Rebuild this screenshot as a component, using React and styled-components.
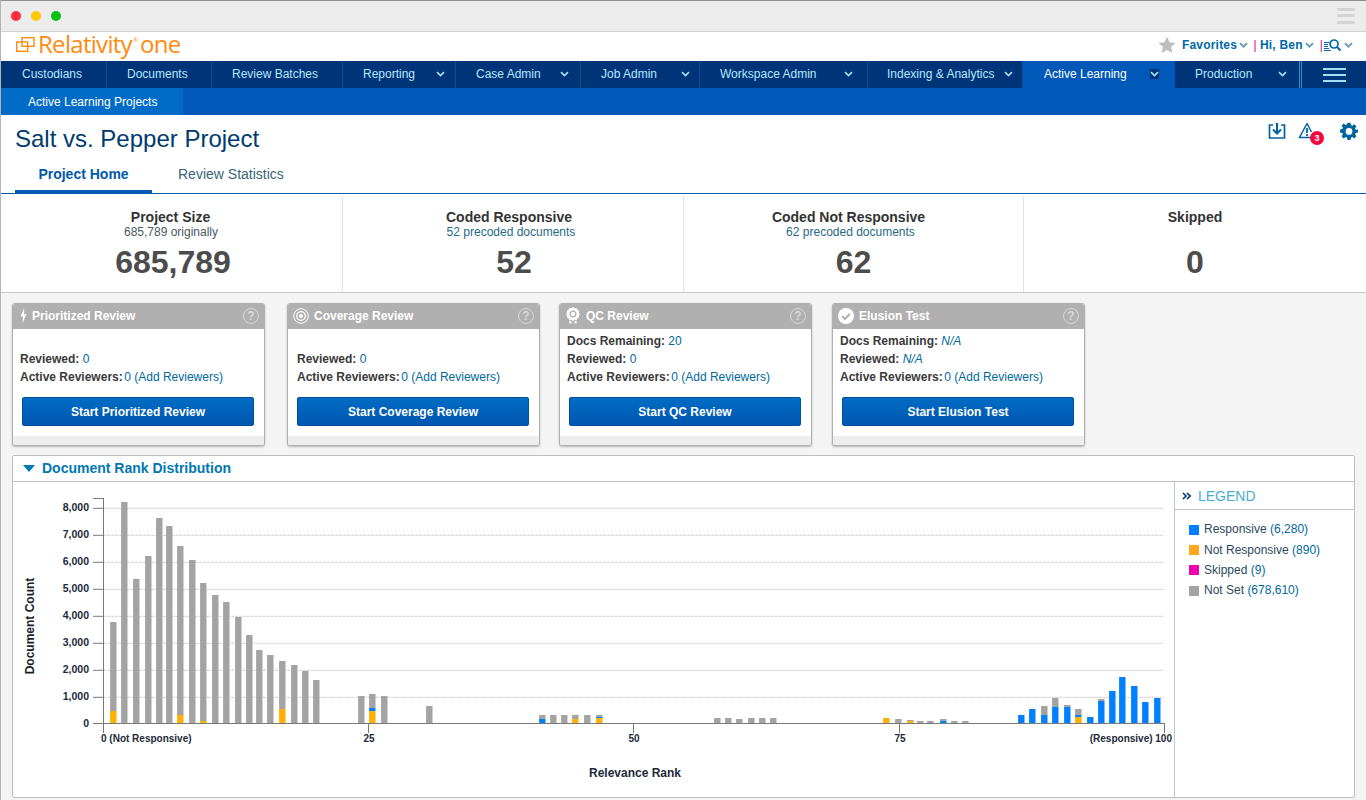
import React from "react";
import styled, { createGlobalStyle } from "styled-components";

const Global = createGlobalStyle`
  html, body { margin: 0; padding: 0; background: #f4f4f4; }
  body { font-family: "Liberation Sans", Arial, sans-serif; font-size: 12px; color: #333; }
  * { box-sizing: border-box; }
`;

const Win = styled.div`
  width: 1366px; height: 800px; overflow: hidden; display: flex; flex-direction: column;
  border-top: 1px solid #8f8f8f; border-left: 1px solid #b5b5b5; background: #f4f4f4;
`;
const TitleBar = styled.div`
  height: 31px; flex: none; background: #ececec; border-bottom: 1px solid #d2d2d2;
  display: flex; align-items: center; padding: 0 11px 1px 10px; gap: 10px;
`;
const Light = styled.span`
  width: 10px; height: 10px; border-radius: 50%; background: ${p => p.$c};
`;
const WinMenu = styled.div`
  margin-left: auto; width: 18px; display: flex; flex-direction: column; gap: 3.5px;
  span { height: 3px; border-radius: 1.5px; background: #d4d4d4; }
`;
const LogoBar = styled.div`
  height: 29px; flex: none; background: #fff; display: flex; align-items: center; padding: 0 13px 5px 15px;
`;
const LogoText = styled.span`
  font-family: "Open Sans", sans-serif; font-weight: 400; font-size: 24px; letter-spacing: -0.7px; color: #ff8a10;
  margin-left: 3px; line-height: 24px;
  sup { font-size: 5px; vertical-align: 11px; margin: 0 2.5px 0 1.5px; letter-spacing: 0; line-height: 0; }
`;
const UserBox = styled.div`
  margin-left: auto; margin-top: 2px; display: flex; align-items: center; font-weight: 700; color: #0068a8;
  font-size: 12px; letter-spacing: 0.2px;
`;
const Pipe = styled.span`
  color: #e0107a; font-weight: 400; margin: ${p => p.$m || "0 3px 0 6px"};
`;
const ChevronSlot = styled.span`
  display: inline-flex; margin-left: ${p => p.$ml ?? 2}px; padding: ${p => (p.$boxed ? "1.5px 0" : "0")};
  background: ${p => (p.$boxed ? "#003478" : "transparent")};
`;
const MainNav = styled.nav`
  height: 27px; flex: none; display: flex; background: #003478;
`;
const NavItem = styled.div`
  width: ${p => p.$w}px; flex: none; display: flex; align-items: center; justify-content: space-between;
  padding: 0 ${p => p.$pr ?? 8}px 1px ${p => p.$pl ?? 20}px;
  background: ${p => (p.$active ? "#0058b8" : "transparent")};
  color: ${p => (p.$active ? "#fff" : "#b4e8ff")};
  border-right: 1px solid ${p => (p.$active || p.$plain ? "transparent" : "#0e4f9c")};
`;
const NavEnd = styled.div`
  flex: 1; display: flex; align-items: center; justify-content: center; padding: 0 19px 0 19px;
  border-left: 3px double #2d8fd0;
`;
const NavBurger = styled.div`
  width: 23px; display: flex; flex-direction: column; gap: 4px;
  span { height: 2px; background: #a4e0fa; }
`;
const SubNav = styled.div`
  height: 27px; flex: none; background: #0058b8; display: flex;
`;
const SubItem = styled.div`
  width: 182px; padding-left: 27px; background: #006cc8; color: #fff; display: flex; align-items: center;
`;
const PageHead = styled.header`
  height: 79px; flex: none; background: #fff; border-bottom: 1px solid #0058a8; padding: 0 8px 0 14px;
  display: flex; flex-direction: column; position: relative;
`;
const TitleRow = styled.div`
  display: flex; justify-content: space-between; height: 47px;
`;
const PageTitle = styled.h1`
  margin: 9px 0 0; font-weight: 400; font-size: 24px; line-height: 30px; color: #003a6e;
`;
const Tools = styled.div`
  display: flex; align-items: flex-start; padding-top: 7px;
`;
const Tool = styled.div`
  position: relative; width: 18px; height: 18px; display: flex; margin-right: ${p => p.$mr ?? 0}px;
`;
const Badge = styled.span`
  position: absolute; left: 12px; top: 9px; width: 14px; height: 14px; border-radius: 50%;
  background: #f5073e; color: #fff; font-size: 9px; font-weight: 700; line-height: 14px; text-align: center;
`;
const Tabs = styled.div`
  display: flex; align-items: stretch; height: 31px; margin-bottom: -1px;
`;
const Tab = styled.div`
  width: ${p => p.$w}px; text-align: ${p => (p.$active ? "center" : "left")}; font-size: 14px; line-height: 24px;
  padding-left: ${p => (p.$active ? 0 : 26)}px; font-weight: ${p => (p.$active ? 700 : 400)};
  color: ${p => (p.$active ? "#0058a8" : "#3a6478")};
  border-bottom: ${p => (p.$active ? "3px solid #0058b8" : "0")};
`;
const Stats = styled.section`
  height: 99px; flex: none; display: flex; background: #fff; border-bottom: 1px solid #c8c8c8; padding-top: 2px;
`;
const Stat = styled.div`
  width: ${p => p.$w}px; flex: none; text-align: center; border-right: ${p => (p.$last ? "0" : "1px solid #e4e4e4")};
  padding-top: 13px;
`;
const StatTitle = styled.div`
  font-weight: 700; font-size: 14px; line-height: 16px; color: #333; padding-right: ${p => p.$shift ?? 0}px;
`;
const StatSub = styled.div`
  font-size: 12px; line-height: 14px; color: ${p => (p.$teal ? "#1f6a84" : "#4a5a60")};
  padding-right: ${p => p.$shift ?? 0}px;
`;
const StatValue = styled.div`
  font-weight: 700; font-size: 32px; line-height: 36px; color: #4c4c4c; margin-top: 5px; padding-left: ${p => p.$shift ?? 0}px;
`;
const Content = styled.main`
  flex: 1; padding: 10px 10px 0 11px; display: flex; flex-direction: column; min-height: 0; background: #f4f4f4;
`;
const Cards = styled.div`
  display: flex; height: 143px; flex: none;
`;
const Card = styled.article`
  width: 253px; height: 143px; margin-right: ${p => p.$mr}px; flex: none; display: flex; flex-direction: column;
  background: #fff; border-radius: 3px; border: 1px solid #b0b0b0; box-shadow: 0 1px 2px rgba(0,0,0,.25); overflow: hidden;
`;
const CardHead = styled.div`
  height: 25px; flex: none; background: #b0b0b0; color: #fff; font-weight: 700; display: flex; align-items: center;
  padding: 0 5px 2px ${p => p.$pl ?? 5}px; gap: ${p => p.$gap ?? 4}px;
`;
const HelpMark = styled.span`
  margin-left: auto; width: 16px; height: 16px; border: 1px solid #d8d8d8; border-radius: 50%; color: #d8d8d8;
  font-size: 12px; font-weight: 700; line-height: 14px; text-align: center;
`;
const CardBody = styled.div`
  flex: 1; padding: 3px ${p => p.$pad ?? 7}px 0; display: flex; flex-direction: column;
`;
const Row = styled.div`
  height: 18px; line-height: 18px; font-weight: 700; color: #3a3a3a; white-space: nowrap;
`;
const Val = styled.span`
  font-weight: 400; color: #00689c; font-style: ${p => (p.$i ? "italic" : "normal")};
  margin-left: ${p => p.$ml ?? 0}px;
`;
const StartBtn = styled.div`
  height: 29px; width: 232px; flex: none; margin: 11px 0 0 ${p => p.$ml}px; border-radius: 2px; color: #fff; font-weight: 700;
  background: linear-gradient(#006cc4, #0056b0); border: 1px solid #004f9c; line-height: 28px; text-align: center;
`;
const CardFoot = styled.div`
  height: 9px; flex: none; background: #eeeeee;
`;
const Panel = styled.section`
  margin-top: 9px; width: 1343px; height: 343px; flex: none; background: #fff; border: 1px solid #bdbdbd;
  border-radius: 2px; display: flex; flex-direction: column;
`;
const PanelHead = styled.div`
  height: 26px; flex: none; border-bottom: 1px solid #bdbdbd; display: flex; align-items: center; gap: 7px;
  padding: 0 0 1px 10px; color: #0078b4; font-weight: 700; font-size: 14px;
`;
const PanelBody = styled.div`
  flex: 1; display: flex; min-height: 0;
`;
const ChartBox = styled.div`
  width: 1161px; flex: none;
  svg { display: block; }
`;
const Legend = styled.aside`
  flex: 1; border-left: 1px solid #c4c4c4; display: flex; flex-direction: column;
`;
const LegendHead = styled.div`
  height: 28px; flex: none; border-bottom: 1px solid #c4c4c4; display: flex; align-items: center; gap: 7px;
  padding-left: 7px; color: #46aed0; font-size: 14px;
`;
const LegendList = styled.div`
  padding: 9px 0 0 14px; display: flex; flex-direction: column;
`;
const LegendItem = styled.div`
  height: 20.4px; display: flex; align-items: center; gap: 5px; color: #2a4a62;
`;
const Swatch = styled.span`
  width: 10px; height: 10px; background: ${p => p.$c}; flex: none; margin-top: 1px;
`;

const Chevron = ({ color = "#a8e0f8", size = 9, sw = 1.6 }) => (
  <svg width={size} height={size * 0.7} viewBox="0 0 9 6" fill="none" stroke={color} strokeWidth={sw}>
    <path d="M1 1l3.5 3.5L8 1" />
  </svg>
);

const navItems = [
  { t: "Custodians", w: 106, pl: 21 },
  { t: "Documents", w: 105 },
  { t: "Review Batches", w: 131 },
  { t: "Reporting", w: 113, c: 1, pr: 10 },
  { t: "Case Admin", w: 125, c: 1, pr: 11 },
  { t: "Job Admin", w: 119, c: 1, pr: 9 },
  { t: "Workspace Admin", w: 168, c: 1, pr: 14 },
  { t: "Indexing & Analytics", w: 155, c: 1, pr: 9, pl: 19 },
  { t: "Active Learning", w: 152, c: 1, pr: 15, pl: 21, active: 1 },
  { t: "Production", w: 124, c: 1, pr: 11, pl: 20, plain: 1 },
];

const Bolt = () => (
  <svg width="7" height="15" viewBox="0 0 7 15" fill="#fff"><path d="M4.200 0L.6 8.200h2.300L2.600 15l3.900-9H4L4.200 0z" /></svg>
);
const Target = () => (
  <svg width="16" height="16" viewBox="0 0 16 16" fill="none" stroke="#fff">
    <circle cx="8" cy="8" r="7.300" /><circle cx="8" cy="8" r="4.300" strokeWidth="1.300" /><circle cx="8" cy="8" r="1.900" fill="#fff" stroke="none" />
  </svg>
);
const Award = () => (
  <svg width="14" height="17" viewBox="0 0 14 17" fill="#fff">
    <path fillRule="evenodd" d="M7 0l1.600 1.200 2-.2.800 1.800 1.800.9-.2 2L14 7l-1 1.300.2 2-1.800.9-.8 1.800-2-.2L7 14l-1.600-1.200-2 .2-.8-1.800-1.800-.9.2-2L0 7l1-1.300-.2-2 1.800-.9.8-1.800 2 .2L7 0zm0 3.500a3.500 3.500 0 100 7 3.500 3.500 0 000-7z" />
    <circle cx="7" cy="7" r="2.200" />
    <path d="M3.500 13.500l2 .8V17l-1-1-1 1zM8.500 14.300l2-.8V17l-1-1-1 1z" />
  </svg>
);
const CheckDisc = () => (
  <svg width="16" height="16" viewBox="0 0 16 16">
    <circle cx="8" cy="8" r="8" fill="#fff" />
    <path d="M4.200 8.200l2.700 2.700 5-5.200" fill="none" stroke="#b0b0b0" strokeWidth="2" />
  </svg>
);

const cards = [
  { title: "Prioritized Review", icon: <Bolt />, mr: 22, pl: 7, gap: 5, pad: 7, ml: 2, btn: "Start Prioritized Review", rows: [null, ["Reviewed: ", "0"]] },
  { title: "Coverage Review", icon: <Target />, mr: 19, pl: 5, gap: 5, pad: 9, ml: 0, btn: "Start Coverage Review", rows: [null, ["Reviewed: ", "0"]] },
  { title: "QC Review", icon: <Award />, mr: 20, pl: 6, gap: 6, pad: 7, ml: 2, btn: "Start QC Review", rows: [["Docs Remaining: ", "20"], ["Reviewed: ", "0"]] },
  { title: "Elusion Test", icon: <CheckDisc />, mr: 0, pl: 5, gap: 5, pad: 7, ml: 2, btn: "Start Elusion Test", rows: [["Docs Remaining: ", "N/A", 1], ["Reviewed: ", "N/A", 1]] },
];

const GRAY = "#a3a3a3", BLUE = "#0080ff", ORANGE = "#ffb000";
// x centre, then [colour, top y] stacked from the top of each bar down to the axis
const bars = [
  [113.3, [GRAY, 622], [ORANGE, 711]], [124.3, [GRAY, 502]], [136.3, [GRAY, 579]], [148.3, [GRAY, 556]],
  [159.3, [GRAY, 518]], [169.3, [GRAY, 526]], [180.3, [GRAY, 546], [ORANGE, 715]], [192.3, [GRAY, 560]],
  [203.3, [GRAY, 583], [ORANGE, 721]], [215.3, [GRAY, 595]], [226.3, [GRAY, 602]], [238.3, [GRAY, 617]],
  [249.3, [GRAY, 635]], [259.3, [GRAY, 650]], [270.3, [GRAY, 655]], [282.3, [GRAY, 661], [ORANGE, 709]],
  [294.3, [GRAY, 665]], [305.3, [GRAY, 671]], [316.3, [GRAY, 680]],
  [361.3, [GRAY, 696]], [372.3, [GRAY, 694], [BLUE, 708], [ORANGE, 711]], [384.3, [GRAY, 696]], [429.3, [GRAY, 706]],
  [542.3, [GRAY, 715], [BLUE, 719]], [553.3, [GRAY, 715]], [564.3, [GRAY, 715]], [575.3, [GRAY, 715], [ORANGE, 719]],
  [587.3, [GRAY, 715]], [599.3, [GRAY, 715], [BLUE, 717], [ORANGE, 718]],
  [717.3, [GRAY, 718]], [728.3, [GRAY, 718]], [739.3, [GRAY, 719]], [751.3, [GRAY, 718]], [762.3, [GRAY, 718]], [773.3, [GRAY, 718]],
  [886.3, [ORANGE, 718]], [898.3, [GRAY, 719]], [910.3, [GRAY, 720], [ORANGE, 721]], [920.3, [GRAY, 721]], [930.3, [GRAY, 721]],
  [943.3, [GRAY, 719], [BLUE, 721]], [954.3, [GRAY, 721]], [965.3, [GRAY, 721]],
  [1021.3, [BLUE, 715]], [1032.3, [BLUE, 709]], [1044.3, [GRAY, 706], [BLUE, 715]], [1055.3, [GRAY, 698], [BLUE, 707]],
  [1067.3, [GRAY, 705], [BLUE, 707]], [1078.3, [GRAY, 709], [BLUE, 715], [ORANGE, 717]], [1090.3, [BLUE, 717]],
  [1101.3, [GRAY, 699], [BLUE, 701]], [1112.3, [BLUE, 691]], [1122.3, [BLUE, 677]], [1134.3, [BLUE, 686]],
  [1145.3, [BLUE, 702]], [1157.3, [BLUE, 698]],
];
const yTicks = [8, 7, 6, 5, 4, 3, 2, 1, 0];
const AXIS = "#7a7a7a";
const label = { fontFamily: "Liberation Sans, sans-serif", fontWeight: 700 };

const Chart = () => (
  <svg width="1161" height="315" viewBox="13 482 1161 315">
    {yTicks.slice(0, 8).map(k => (
      <line key={k} x1="103" x2="1164" y1={723.5 - k * 27 + 0.8} y2={723.5 - k * 27 + 0.8} stroke="#cfcfcf" strokeDasharray="3 1" />
    ))}
    {bars.map(([x, ...segs]) => segs.map(([c, top], i) => {
      const end = i + 1 < segs.length ? segs[i + 1][1] : 723;
      return <rect key={x + "-" + i} x={x - 3.2} width="6.4" y={top} height={end - top} fill={c} />;
    }))}
    <line x1="93" x2="1164.5" y1="723.5" y2="723.5" stroke={AXIS} />
    <line x1="103.5" x2="103.5" y1="498" y2="733" stroke={AXIS} />
    <line x1="93" x2="103" y1="498.5" y2="498.5" stroke={AXIS} />
    {yTicks.map(k => (
      <React.Fragment key={k}>
        <line x1="93" x2="103" y1={723.5 - k * 27 + 0.8 * (k > 0)} y2={723.5 - k * 27 + 0.8 * (k > 0)} stroke={AXIS} />
        <text x="89" y={727 - k * 27} textAnchor="end" fontSize="10.5" fill="#1c2a3a" style={label}>
          {k === 0 ? "0" : k + ",000"}
        </text>
      </React.Fragment>
    ))}
    {[368.5, 633.5, 899.5, 1164.5].map(x => (
      <line key={x} x1={x} x2={x} y1="723" y2="733" stroke={AXIS} />
    ))}
    <text x="101" y="742" fontSize="10" fill="#1c2a3a" style={label}>0 (Not Responsive)</text>
    <text x="369" y="742" fontSize="10" textAnchor="middle" fill="#1c2a3a" style={label}>25</text>
    <text x="634" y="742" fontSize="10" textAnchor="middle" fill="#1c2a3a" style={label}>50</text>
    <text x="900" y="742" fontSize="10" textAnchor="middle" fill="#1c2a3a" style={label}>75</text>
    <text x="1172" y="742" fontSize="10" textAnchor="end" fill="#1c2a3a" style={label}>(Responsive) 100</text>
    <text x="635" y="777" fontSize="12" textAnchor="middle" fill="#1c2a3a" style={label}>Relevance Rank</text>
    <text transform="translate(34 626) rotate(-90)" fontSize="12" textAnchor="middle" fill="#1c1c2a" style={label}>Document Count</text>
  </svg>
);

const legend = [
  ["Responsive", "(6,280)", "#0080ff"],
  ["Not Responsive", "(890)", "#ffa81e"],
  ["Skipped", "(9)", "#ee00aa"],
  ["Not Set", "(678,610)", "#a3a3a3"],
];

const stats = [
  { w: 342, t: "Project Size", s: "685,789 originally", v: "685,789", ts: 2, ss: 1, vs: 3 },
  { w: 341, t: "Coded Responsive", s: "52 precoded documents", v: "52", teal: 1, ts: 8, ss: 4, vs: 2 },
  { w: 340, t: "Coded Not Responsive", s: "62 precoded documents", v: "62", teal: 1, ts: 10, ss: 6 },
  { w: 342, t: "Skipped", v: "0", last: 1 },
];

export default function App() {
  return (
    <Win>
      <Global />
      <TitleBar>
        <Light $c="#ff2d3f" /><Light $c="#ffc800" /><Light $c="#0ac014" />
        <WinMenu><span /><span /><span /></WinMenu>
      </TitleBar>
      <LogoBar>
        <svg width="19" height="15" viewBox="0 0 19 15" fill="none" stroke="#ff8a10" strokeWidth="1.4">
          <rect x="6" y="0.7" width="12" height="8.6" /><rect x="0.7" y="5" width="11" height="9.3" />
        </svg>
        <LogoText>Relativity<sup>®</sup>one</LogoText>
        <UserBox>
          <svg width="18" height="18" viewBox="0 0 24 24" fill="#bdbdbd" style={{ marginRight: 6 }}>
            <path d="M12 1l3.4 7.400 8 .9-6 5.400 1.700 8L12 18.700 4.900 22.700l1.700-8-6-5.400 8-.9z" />
          </svg>
          Favorites<ChevronSlot $ml={1.5}><Chevron color="#6c9cb8" sw={2} /></ChevronSlot>
          <Pipe>|</Pipe>Hi, Ben<ChevronSlot><Chevron color="#6c9cb8" sw={2} /></ChevronSlot>
          <Pipe $m="0 1px 0 6px">|</Pipe>
          <svg width="17" height="13" viewBox="0 0 17 13" fill="none" stroke="#0068a8">
            <path d="M0 3.500h5M0 5.500h4M0 7.500h4M0 9.500h5M0 11.500h7" strokeWidth="1" />
            <circle cx="10" cy="5" r="4" strokeWidth="1.700" /><path d="M13 8l3.500 3.500" strokeWidth="2" />
          </svg>
          <ChevronSlot $ml={3}><Chevron color="#6c9cb8" sw={2} /></ChevronSlot>
        </UserBox>
      </LogoBar>
      <MainNav>
        {navItems.map(n => (
          <NavItem key={n.t} $w={n.w} $pr={n.pr} $pl={n.pl} $active={n.active} $plain={n.plain}>
            <span>{n.t}</span>
            {n.c ? <ChevronSlot $ml={0} $boxed={n.active}><Chevron color="#a8e0f8" /></ChevronSlot> : null}
          </NavItem>
        ))}
        <NavEnd><NavBurger><span /><span /><span /></NavBurger></NavEnd>
      </MainNav>
      <SubNav><SubItem>Active Learning Projects</SubItem></SubNav>
      <PageHead>
        <TitleRow>
          <PageTitle>Salt vs. Pepper Project</PageTitle>
          <Tools>
            <Tool $mr={12}>
              <svg width="18" height="18" viewBox="0 0 18 18" fill="none" stroke="#00639c" strokeWidth="1.7">
                <path d="M5 3H1.500v13h15V3H13" /><path d="M9 1v9.500" strokeWidth="2" /><path d="M5 7.500l4 4 4-4" strokeWidth="2" />
              </svg>
            </Tool>
            <Tool $mr={24}>
              <svg width="18" height="18" viewBox="0 0 18 18" fill="none" stroke="#00639c" strokeWidth="1.5">
                <path d="M9 1.500L1.500 15.500h12" /><path d="M9 1.500l4.500 8.500" /><path d="M9 6v5M9 12v2" strokeWidth="1.8" />
              </svg>
              <Badge>3</Badge>
            </Tool>
            <Tool>
              <svg width="18" height="18" viewBox="0 0 24 24" fill="#00639c">
                <path fillRule="evenodd" d="M10 1h4l.6 3.100 1.800.8 2.700-1.800 2.800 2.800-1.800 2.700.8 1.800L24 10v4l-3.100.6-.8 1.800 1.800 2.700-2.800 2.800-2.700-1.800-1.800.8L14 24h-4l-.6-3.100-1.800-.8-2.700 1.800-2.800-2.800 1.800-2.700-.8-1.800L0 14v-4l3.100-.6.800-1.800L2.100 4.900l2.800-2.800 2.700 1.800 1.800-.8L10 1zm2 7a4.500 4.500 0 100 9 4.500 4.500 0 000-9z" />
              </svg>
            </Tool>
          </Tools>
        </TitleRow>
        <Tabs>
          <Tab $w={137} $active>Project Home</Tab>
          <Tab $w={200}>Review Statistics</Tab>
        </Tabs>
      </PageHead>
      <Stats>
        {stats.map(s => (
          <Stat key={s.t} $w={s.w} $last={s.last}>
            <StatTitle $shift={s.ts}>{s.t}</StatTitle>
            <StatSub $teal={s.teal} $shift={s.ss}>{s.s || "\u00a0"}</StatSub>
            <StatValue $shift={s.vs}>{s.v}</StatValue>
          </Stat>
        ))}
      </Stats>
      <Content>
        <Cards>
          {cards.map(c => (
            <Card key={c.title} $mr={c.mr}>
              <CardHead $pl={c.pl} $gap={c.gap}>
                {c.icon}<span>{c.title}</span><HelpMark>?</HelpMark>
              </CardHead>
              <CardBody $pad={c.pad}>
                {c.rows.map((r, i) => (
                  <Row key={i}>{r ? <>{r[0]}<Val $i={r[2]}>{r[1]}</Val></> : "\u00a0"}</Row>
                ))}
                <Row>Active Reviewers:<Val $ml={1.5}>0 (Add Reviewers)</Val></Row>
                <StartBtn $ml={c.ml}>{c.btn}</StartBtn>
              </CardBody>
              <CardFoot />
            </Card>
          ))}
        </Cards>
        <Panel>
          <PanelHead>
            <svg width="12" height="7" viewBox="0 0 12 7" fill="#0078b4"><path d="M0 0h12L6 7z" /></svg>
            Document Rank Distribution
          </PanelHead>
          <PanelBody>
            <ChartBox><Chart /></ChartBox>
            <Legend>
              <LegendHead>
                <svg width="9" height="8" viewBox="0 0 9 8" fill="none" stroke="#003a6e" strokeWidth="1.6"><path d="M1 1l3 3-3 3M5 1l3 3-3 3" /></svg>
                LEGEND
              </LegendHead>
              <LegendList>
                {legend.map(([a, b, c]) => (
                  <LegendItem key={a}><Swatch $c={c} /><span>{a} <Val>{b}</Val></span></LegendItem>
                ))}
              </LegendList>
            </Legend>
          </PanelBody>
        </Panel>
      </Content>
    </Win>
  );
}
